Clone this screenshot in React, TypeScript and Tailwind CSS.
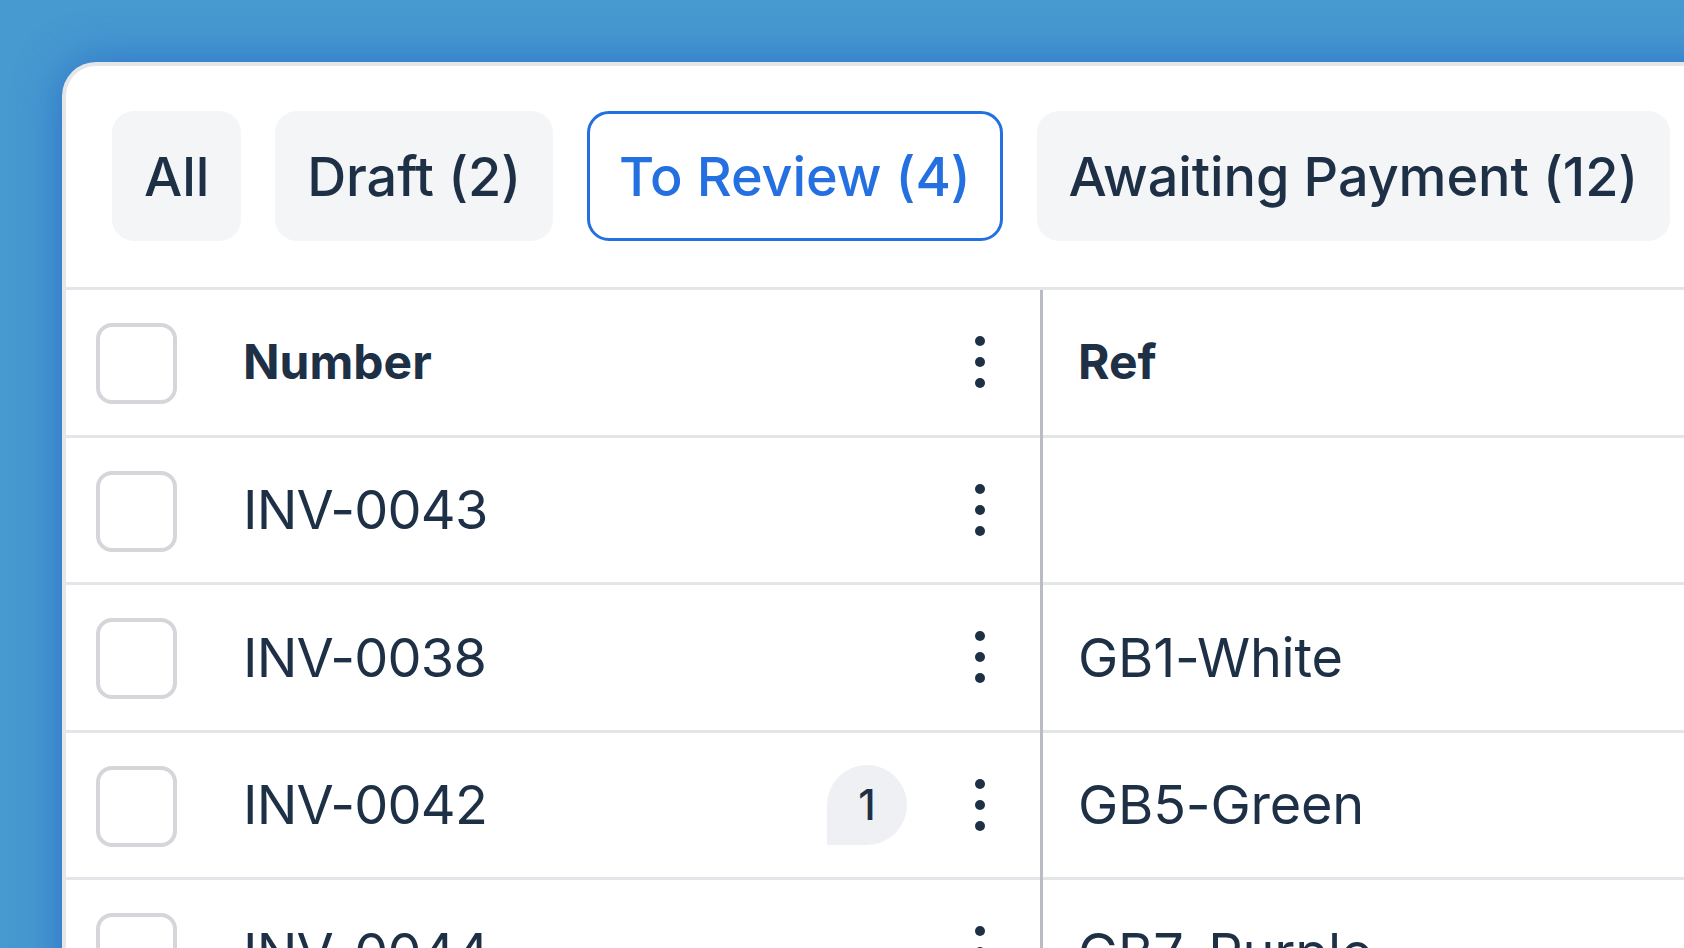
import React from 'react';

const tabs = [
  { label: 'All', active: false },
  { label: 'Draft (2)', active: false },
  { label: 'To Review (4)', active: true },
  { label: 'Awaiting Payment (12)', active: false },
];

const rows = [
  { number: 'INV-0043', ref: '', badge: '' },
  { number: 'INV-0038', ref: 'GB1-White', badge: '' },
  { number: 'INV-0042', ref: 'GB5-Green', badge: '1' },
  { number: 'INV-0044', ref: 'GB7-Purple', badge: '' },
];

function Kebab() {
  return (
    <div className="flex h-[60px] w-[50px] items-center justify-center">
      <svg width="10" height="52" viewBox="0 0 10 52" fill="#1e3046">
        <circle cx="5" cy="5" r="5" />
        <circle cx="5" cy="26" r="5" />
        <circle cx="5" cy="47" r="5" />
      </svg>
    </div>
  );
}

function Checkbox() {
  return <div className="mt-[3px] h-[81px] w-[81px] shrink-0 rounded-[16px] border-4 border-[#d4d6da] bg-white" />;
}

export default function App() {
  return (
    <div
      className="h-[948px] w-full overflow-hidden bg-[#469ad0] pl-[62px] pt-[62px] text-[#1e3046]"
      style={{ fontFamily: 'Inter, "Noto Sans", sans-serif' }}
    >
      <div className="w-[1700px] rounded-tl-[34px] border-l-4 border-t-4 border-[#e4e6ea] bg-white shadow-[0_0_45px_rgba(30,85,195,0.6)]">
        {/* status tabs */}
        <div className="flex gap-[34px] border-b-[3px] border-[#e3e5e9] px-[46px] pb-[46px] pt-[45px]">
          {tabs.map((t) =>
            t.active ? (
              <div
                key={t.label}
                className="flex h-[130px] items-center rounded-[22px] border-[3px] border-[#2470e0] bg-white px-[29px] text-[54px] font-medium tracking-[-0.1px] text-[#2470e0]"
              >
                {t.label}
              </div>
            ) : (
              <div
                key={t.label}
                className="flex h-[130px] items-center rounded-[22px] bg-[#f4f5f7] px-[32px] text-[54px] font-medium tracking-[-0.1px]"
              >
                {t.label}
              </div>
            )
          )}
        </div>

        {/* table */}
        <div className="flex">
          <div className="w-[977px] shrink-0 border-r-[3px] border-[#b9bdc3]">
            <div className="flex h-[147.5px] items-center border-b-[3px] border-[#e3e5e9] pl-[30px] pr-[35px]">
              <Checkbox />
              <div className="ml-[66px] flex-1 text-[48px] font-bold">Number</div>
              <Kebab />
            </div>
            {rows.map((r) => (
              <div
                key={r.number}
                className="flex h-[147.5px] items-center border-b-[3px] border-[#e3e5e9] pl-[30px] pr-[35px]"
              >
                <Checkbox />
                <div className="ml-[66px] flex-1 text-[54px] tracking-[-0.8px]">{r.number}</div>
                {r.badge && (
                  <div className="mr-[48px] flex h-[80px] w-[80px] items-center justify-center rounded-full rounded-bl-[8px] bg-[#eef0f4] text-[42px] font-medium">
                    {r.badge}
                  </div>
                )}
                <Kebab />
              </div>
            ))}
          </div>
          <div className="flex-1">
            <div className="flex h-[147.5px] items-center border-b-[3px] border-[#e3e5e9] pl-[35px] text-[48px] font-bold">
              Ref
            </div>
            {rows.map((r) => (
              <div
                key={r.number}
                className="flex h-[147.5px] items-center border-b-[3px] border-[#e3e5e9] pl-[35px] text-[54px] tracking-[-0.2px]"
              >
                {r.ref}
              </div>
            ))}
          </div>
        </div>
      </div>
    </div>
  );
}
